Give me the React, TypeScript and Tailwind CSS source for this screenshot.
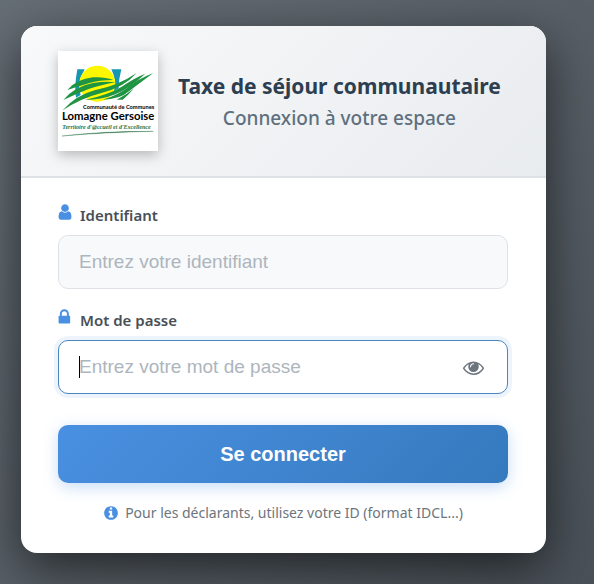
import { ReactNode } from "react";

function Icon({ path, viewBox = "0 0 1792 1792", className }: { path: string; viewBox?: string; className: string }) {
  return (
    <svg viewBox={viewBox} fill="currentColor" aria-hidden="true" className={className}>
      <path d={path} />
    </svg>
  );
}

const icons = {
  user: "M1536 1399q0 109-62.5 187t-150.5 78h-854q-88 0-150.5-78t-62.5-187q0-85 8.5-160.5t31.5-152 58.5-131 94-89 134.5-34.5q131 128 313 128t313-128q76 0 134.5 34.5t94 89 58.5 131 31.5 152 8.5 160.5zm-256-887q0 159-112.5 271.5t-271.5 112.5-271.5-112.5-112.5-271.5 112.5-271.5 271.5-112.5 271.5 112.5 112.5 271.5z",
  lock: "M640 768h512v-192q0-106-75-181t-181-75-181 75-75 181v192zm832 96v576q0 40-28 68t-68 28h-960q-40 0-68-28t-28-68v-576q0-40 28-68t68-28h32v-192q0-184 132-316t316-132 316 132 132 316v192h32q40 0 68 28t28 68z",
  eye: "M1664 960q-152-236-381-353 61 104 61 225 0 185-131.5 316.5t-316.5 131.5-316.5-131.5-131.5-316.5q0-121 61-225-229 117-381 353 133 205 333.5 326.5t434.5 121.5 434.5-121.5 333.5-326.5zm-720-384q0-20-14-34t-34-14q-125 0-214.5 89.5t-89.5 214.5q0 20 14 34t34 14 34-14 14-34q0-86 61-147t147-61q20 0 34-14t14-34zm848 384q0 34-20 69-140 230-376.5 368.5t-499.5 138.5-499.5-139-376.5-368q-20-35-20-69t20-69q140-229 376.5-368t499.5-139 499.5 139 376.5 368q20 35 20 69z",
  info: "M1152 1376v-160q0-14-9-23t-23-9h-96v-512q0-14-9-23t-23-9h-320q-14 0-23 9t-9 23v160q0 14 9 23t23 9h96v320h-96q-14 0-23 9t-9 23v160q0 14 9 23t23 9h448q14 0 23-9t9-23zm-128-896v-160q0-14-9-23t-23-9h-192q-14 0-23 9t-9 23v160q0 14 9 23t23 9h192q14 0 23-9t9-23zm640 416q0 209-103 385.5t-279.5 279.5-385.5 103-385.5-103-279.5-279.5-103-385.5 103-385.5 279.5-279.5 385.5-103 385.5 103 279.5 279.5 103 385.5z",
};

function Logo() {
  return (
    <svg
      viewBox="0 0 300 300"
      role="img"
      aria-label="Lomagne Gersoise"
      className="size-[100px] shrink-0 bg-white shadow-[0_4px_12px_rgba(0,0,0,0.25)]"
    >
      <path d="M58 55H80L67 82Q60 110 68 132L54 140Q48 110 58 55Z" fill="#1597b4" />
      <path d="M160 55H190Q182 85 182 112L165 122Q178 90 160 55Z" fill="#1597b4" />
      <circle cx="118" cy="98" r="54" fill="#fdf800" />
      <g fill="#1f9443">
        <path d="M28 117Q56 84 105 79Q140 77 166 87Q125 87 92 97Q60 107 28 117Z" />
        <path d="M16 147Q50 106 105 96Q145 90 172 94Q125 103 90 115Q52 130 16 147Z" />
        <path d="M14 178Q55 132 110 118Q180 104 236 66Q200 108 130 126Q68 142 14 178Z" />
        <path d="M80 147Q150 132 190 108Q230 80 262 68Q215 112 172 130Q130 147 80 147Z" />
        <path d="M134 146Q180 132 208 110Q240 84 286 66Q240 100 214 120Q185 146 134 146Z" />
        <path d="M176 146Q205 132 228 112Q210 134 194 146Z" />
      </g>
      <text x="75" y="175" fontSize="17" fontWeight="700" className="font-['Lato',sans-serif]">
        Communauté de Communes
      </text>
      <text x="12" y="208" fontSize="34" fontWeight="700" className="font-['Lato',sans-serif]">
        Lomagne Gersoise
      </text>
      <text x="13" y="234" fontSize="18" fontStyle="italic" fontWeight="700" fill="#267342" className="font-['Liberation_Serif',serif]">
        Territoire d'@ccueil et d'Excellence
      </text>
      <path d="M12 255Q140 240 286 241Q140 244 12 255Z" fill="#287044" stroke="#287044" />
    </svg>
  );
}

function FieldLabel({ htmlFor, icon, children }: { htmlFor: string; icon: string; children: ReactNode }) {
  return (
    <label htmlFor={htmlFor} className="mb-2 flex h-6 items-center gap-2 text-[15px] font-semibold text-[#495057]">
      <Icon path={icon} viewBox={icon === icons.lock ? "320 0 1280 1792" : "256 0 1280 1792"} className="mb-1.5 h-[18px] w-[14px] text-[#4a90e2]" />
      {children}
    </label>
  );
}

export default function App() {
  return (
    <div className="min-h-screen bg-linear-135 from-[#666e75] to-[#495057] pt-[26px] pr-12 pb-[31px] pl-[21px] font-['Noto_Sans',sans-serif]">
      <main className="overflow-hidden rounded-2xl bg-white shadow-[0_15px_50px_rgba(0,0,0,0.6)]">
        <header className="flex items-center gap-5 border-b-2 border-[#dee2e6] bg-linear-135 from-[#f8f9fa] to-[#e9ecef] px-[37px] py-[25px]">
          <Logo />
          <div className="pt-0.5 text-center whitespace-nowrap">
            <h1 className="text-[21px] leading-8 font-bold text-[#2c3e50]">Taxe de séjour communautaire</h1>
            <p className="text-[19px] leading-8 font-medium text-[#5f6f7e]">Connexion à votre espace</p>
          </div>
        </header>

        <form className="pt-[25px] pr-[38px] pb-7 pl-[37px]" onSubmit={(e) => e.preventDefault()}>
          <div className="mb-[19px]">
            <FieldLabel htmlFor="login" icon={icons.user}>
              Identifiant
            </FieldLabel>
            <input
              id="login"
              type="text"
              placeholder="Entrez votre identifiant"
              className="h-[54px] w-full rounded-[10px] border border-[#dee2e6] bg-[#f8f9fa] px-5 font-['Liberation_Sans',sans-serif] text-[19px] outline-none placeholder:text-[#adb5bd]"
            />
          </div>

          <div className="mb-[31px]">
            <FieldLabel htmlFor="password" icon={icons.lock}>
              Mot de passe
            </FieldLabel>
            <div className="relative">
              <input
                id="password"
                type="password"
                placeholder="Entrez votre mot de passe"
                className="h-[54px] w-full rounded-[10px] border border-[#4a86bf] bg-white pr-14 pl-5 font-['Liberation_Sans',sans-serif] text-[19px] caret-transparent shadow-[0_0_0_4px_rgba(74,144,226,0.1)] outline-none placeholder:text-[#adb5bd]"
              />
              <span className="absolute top-4 left-[21px] h-[22px] w-px bg-black" />
              <button type="button" aria-label="Afficher le mot de passe" className="absolute inset-y-0 right-6 text-[#6c757d]">
                <Icon path={icons.eye} className="size-[21px]" />
              </button>
            </div>
          </div>

          <button
            type="submit"
            className="h-[58px] w-full rounded-[10px] bg-linear-135 from-[#4a90e2] to-[#357abd] font-['Liberation_Sans',sans-serif] text-[20px] font-bold text-white shadow-[0_4px_15px_rgba(74,144,226,0.3)]"
          >
            Se connecter
          </button>

          <p className="mt-[18px] flex items-center justify-center gap-1.5 text-[14px] leading-6 text-[#6c757d]">
            <Icon path={icons.info} className="size-4 text-[#4a90e2]" />
            Pour les déclarants, utilisez votre ID (format IDCL...)
          </p>
        </form>
      </main>
    </div>
  );
}
